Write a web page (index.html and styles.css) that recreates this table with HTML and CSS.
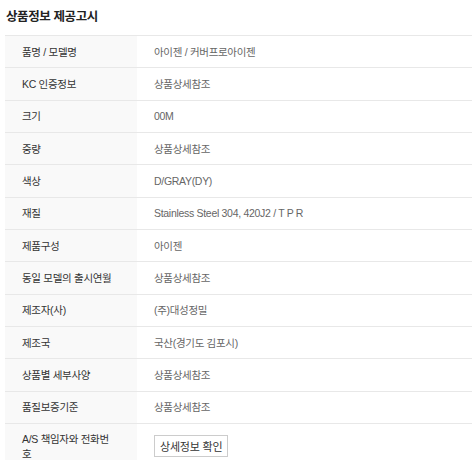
FILE: index.html
```html
<!DOCTYPE html>
<html lang="ko">
<head>
<meta charset="utf-8">
<link rel="stylesheet" href="styles.css">
</head>
<body>
<div class="notice">
  <h3 class="title">상품정보 제공고시</h3>
  <table class="info">
    <tr><th>품명 / 모델명</th><td>아이젠 / 커버프로아이젠</td></tr>
    <tr><th>KC 인증정보</th><td>상품상세참조</td></tr>
    <tr><th>크기</th><td>00M</td></tr>
    <tr><th>중량</th><td>상품상세참조</td></tr>
    <tr><th>색상</th><td>D/GRAY(DY)</td></tr>
    <tr><th>재질</th><td>Stainless Steel 304, 420J2 / T P R</td></tr>
    <tr><th>제품구성</th><td>아이젠</td></tr>
    <tr><th>동일 모델의 출시연월</th><td>상품상세참조</td></tr>
    <tr><th>제조자(사)</th><td>(주)대성정밀</td></tr>
    <tr><th>제조국</th><td>국산(경기도 김포시)</td></tr>
    <tr><th>상품별 세부사양</th><td>상품상세참조</td></tr>
    <tr><th>품질보증기준</th><td>상품상세참조</td></tr>
    <tr class="last"><th>A/S 책임자와 전화번호</th><td><button class="btn" type="button">상세정보 확인</button></td></tr>
  </table>
</div>
</body>
</html>
```
FILE: styles.css
```css
html, body {
  margin: 0;
  padding: 0;
  background: #fff;
}
body {
  font-family: "Liberation Sans", "Noto Sans CJK KR", sans-serif;
  overflow: hidden;
}
.notice {
  padding: 8px 0 0 5px;
}
.title {
  margin: 0 0 0 1px;
  font-size: 12.5px;
  letter-spacing: -0.4px;
  font-weight: bold;
  color: #222;
  line-height: 18px;
  height: 27px;
}
.info {
  border-collapse: collapse;
  width: 480px;
  table-layout: fixed;
  border-top: 1px solid #e8e8e8;
}
.info tr {
  border-bottom: 1px solid #e8e8e8;
}
.info th, .info td {
  height: 31.33px;
  padding: 0 0 0 17px;
  text-align: left;
  vertical-align: middle;
  font-size: 10.5px;
  letter-spacing: -0.3px;
  line-height: 16px;
  font-weight: normal;
}
.info th {
  padding-right: 21px;
  width: 94px;
  background: #f9f9f9;
  color: #333;
}
.info td {
  color: #666;
}
.info .last th {
  padding-top: 8px;
  vertical-align: top;
  line-height: 15px;
}
.info .last td {
  padding-top: 11px;
  vertical-align: top;
}
.btn {
  font-family: inherit;
  font-size: 11px;
  letter-spacing: -0.2px;
  color: #333;
  background: #fff;
  border: 1px solid #ccc;
  padding: 2px 5px;
  margin: 0;
  height: 22px;
}
```
